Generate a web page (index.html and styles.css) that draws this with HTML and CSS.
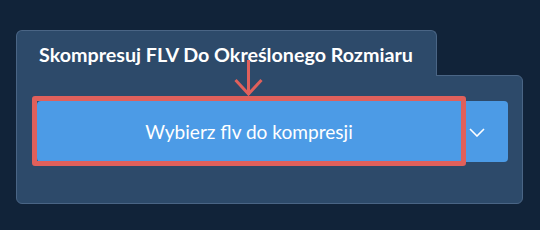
FILE: index.html
```html
<!DOCTYPE html>
<html lang="pl">
<head>
  <meta charset="UTF-8">
  <meta name="viewport" content="width=device-width, initial-scale=1.0">
  <title>Skompresuj FLV</title>
  <link rel="stylesheet" href="styles.css">
</head>
<body>
  <div class="tool">
    <div class="tab">Skompresuj FLV Do Określonego Rozmiaru</div>
    <div class="panel">
      <div class="picker">
        <button class="choose">Wybierz flv do kompresji</button>
        <button class="more">
          <svg width="16" height="9" viewBox="0 0 16 9"><polyline points="1,1 8,8 15,1" fill="none" stroke="#fff" stroke-width="1.6"/></svg>
        </button>
      </div>
    </div>

    <!-- annotation arrow -->
    <svg class="arrow" width="30" height="40" viewBox="0 0 30 40">
      <line x1="14.5" y1="2" x2="14.5" y2="37" stroke="#e0605b" stroke-width="3"/>
      <polyline points="1.5,22 14.5,36 27.5,22" fill="none" stroke="#e0605b" stroke-width="3"/>
    </svg>
  </div>
</body>
</html>
```

FILE: styles.css
```css
body {
  margin: 0;
  background-color: #112339;
  font-family: Lato, "Open Sans", sans-serif;
}

.tool {
  position: relative;
  width: 507px;
  margin: 30px 0 0 16px;
}

.tab {
  display: inline-block;
  position: relative;
  z-index: 1;
  margin-bottom: -1px;
  padding: 14px 23px 11px 22px;
  background-color: #2d4a6a;
  border: 1px solid #4a6585;
  border-bottom: none;
  border-radius: 6px 6px 0 0;
  color: #fff;
  font-size: 19.7px;
  font-weight: bold;
  line-height: 20px;
}

.panel {
  background-color: #2d4a6a;
  border: 1px solid #4a6585;
  border-radius: 0 6px 6px 6px;
  padding: 25px 14px 41px 20px;
}

.picker {
  display: flex;
}

.picker button {
  height: 61px;
  border: none;
  background-color: #4c9be6;
  color: #fff;
  font-family: Lato, "Open Sans", sans-serif;
  cursor: pointer;
}

.choose {
  position: relative;
  flex: 1;
  font-size: 19.1px;
  border-radius: 4px 0 0 4px;
}

/* red highlight box */
.choose::after {
  content: "";
  position: absolute;
  top: -5px;
  left: -5px;
  right: -5px;
  bottom: -4px;
  border: 5px solid #e0605b;
  border-radius: 3px;
}

.more {
  width: 47px;
  padding: 0;
  border-radius: 0 4px 4px 0;
  display: flex;
  align-items: center;
  justify-content: center;
}

.more svg {
  margin-left: -16px;
  margin-top: 2px;
}

.arrow {
  position: absolute;
  left: 218px;
  top: 28px;
  z-index: 2;
}
```
